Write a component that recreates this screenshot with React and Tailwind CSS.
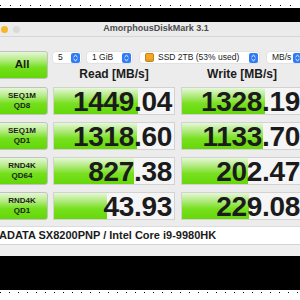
import React from "react";

const rows = [
  { a: "SEQ1M", b: "QD8", read: "1449.04", rw: 84, write: "1328.19", ww: 83 },
  { a: "SEQ1M", b: "QD1", read: "1318.60", rw: 83, write: "1133.70", ww: 81 },
  { a: "RND4K", b: "QD64", read: "827.38", rw: 80, write: "202.47", ww: 66 },
  { a: "RND4K", b: "QD1", read: "43.93", rw: 53, write: "229.08", ww: 67 },
];

const font = { fontFamily: '"Liberation Sans", Arial, sans-serif' };

function Stepper() {
  return (
    <svg width="9" height="10" viewBox="0 0 9 10" className="shrink-0">
      <rect x="0" y="0" width="9" height="10" rx="2" fill="#2f7cf6" />
      <path d="M2.6 4 L4.5 2.2 L6.4 4" stroke="#fff" strokeWidth="1" fill="none" />
      <path d="M2.6 6 L4.5 7.8 L6.4 6" stroke="#fff" strokeWidth="1" fill="none" />
    </svg>
  );
}

function DiskIcon() {
  return (
    <svg width="9" height="9" viewBox="0 0 9 9" className="shrink-0">
      <rect x="0.5" y="0.5" width="8" height="8" rx="1.2" fill="#f3a81f" stroke="#a8700e" strokeWidth="0.8" />
      <line x1="1" y1="7" x2="8" y2="7" stroke="#c98812" strokeWidth="0.6" />
    </svg>
  );
}

function Select({ w, children }) {
  return (
    <div className={`${w} h-[11px] bg-white rounded-[3px] flex items-center justify-between pl-[5px] pr-[1px] shadow-[0_0_0_0.5px_#d8d8d8]`}>
      <div className="flex items-center gap-[4px] text-[8.5px] leading-none text-[#222] whitespace-nowrap">{children}</div>
      <Stepper />
    </div>
  );
}

function GreenButton({ children }) {
  return (
    <div className="w-[52px] h-[28px] shrink-0 rounded-[3px] border border-[#c2c2c2] bg-[linear-gradient(180deg,#e4f7d6_0%,#b6ec86_30%,#74df1c_60%,#62d806_100%)] flex flex-col items-center justify-center text-[#1c1c1c]">
      {children}
    </div>
  );
}

function Cell({ value, width }) {
  return (
    <div className="relative w-[122px] h-[28px] shrink-0 border border-[#d2d2d2] bg-[#f5f5f5]">
      <div
        className="absolute left-0 top-0 bottom-0 bg-[linear-gradient(180deg,#e6f8d8_0%,#b2ea80_30%,#78e020_60%,#66d80a_100%)]"
        style={{ width }}
      />
      <div className="relative h-full pr-[2px] pt-[2px] text-right text-[28px] font-bold leading-[24px] text-[#1b1b1b] tracking-[-0.3px] whitespace-nowrap">
        {value}
      </div>
    </div>
  );
}

export default function App() {
  return (
    <div className="w-[300px] h-[300px] bg-white overflow-hidden flex flex-col" style={font}>
      <div className="h-[8px] shrink-0 flex flex-col">
        <div className="mt-[5px] h-px w-full bg-[repeating-linear-gradient(90deg,#000_0_1px,transparent_1px_10px)]" />
      </div>
      <div className="h-[14px] shrink-0 bg-black" />

      <div className="w-[312px] ml-[-4px] shrink-0 bg-[#ececec] flex flex-col">
        <div className="h-[15px] relative border-b border-[#d6d6d6] bg-[#ebebeb] flex items-center">
          <div className="flex items-center gap-[5px] pl-[5px]">
            <div className="w-[7px] h-[7px] rounded-full bg-[#f7b52c]" />
            <div className="w-[7px] h-[7px] rounded-full bg-[#d9d9d9]" />
          </div>
          <div className="absolute left-0 right-0 top-0 bottom-0 flex items-center justify-center pl-[8px] text-[9px] text-[#4a4a4a] font-semibold">
            AmorphousDiskMark 3.1
          </div>
        </div>

        <div className="flex flex-col pt-[14px]">
          <div className="h-[28px] flex gap-[5px]">
            <GreenButton>
              <span className="text-[11.5px] font-bold leading-none">All</span>
            </GreenButton>
            <div className="flex flex-col pt-[1px]">
              <div className="flex items-center">
                <Select w="w-[28px]">5</Select>
                <div className="w-[6px]" />
                <Select w="w-[45px]">1 GiB</Select>
                <div className="w-[8px]" />
                <div className="w-[119px] h-[11px] bg-white rounded-[3px] flex items-center justify-between pl-[5px] pr-[1px] shadow-[0_0_0_0.5px_#d8d8d8]">
                  <div className="flex items-center gap-[4px] text-[8.5px] leading-none text-[#222] whitespace-nowrap">
                    <DiskIcon />
                    SSD 2TB (53% used)
                  </div>
                  <Stepper />
                </div>
                <div className="w-[8px]" />
                <Select w="w-[36px]">MB/s</Select>
              </div>
              <div className="flex gap-[6px] mt-[5px]">
                <div className="w-[122px] text-center text-[12px] font-bold leading-none text-[#1b1b1b]">Read [MB/s]</div>
                <div className="w-[122px] text-center text-[12px] font-bold leading-none text-[#1b1b1b]">Write [MB/s]</div>
              </div>
            </div>
          </div>

          <div className="flex flex-col gap-[7px] mt-[8px]">
            {rows.map((r, i) => (
              <div key={i} className="flex">
                <GreenButton>
                  <span className="text-[8px] font-semibold leading-[10px]">{r.a}</span>
                  <span className="text-[8px] font-semibold leading-[10px]">{r.b}</span>
                </GreenButton>
                <div className="w-[5px]" />
                <Cell value={r.read} width={r.rw} />
                <div className="w-[6px]" />
                <Cell value={r.write} width={r.ww} />
              </div>
            ))}
          </div>

          <div className="mt-[6px] h-[18px] bg-white border-t border-[#dcdcdc] flex items-center pl-[3px] text-[11px] font-bold text-[#1b1b1b] whitespace-nowrap">
            ADATA SX8200PNP / Intel Core i9-9980HK
          </div>
          <div className="h-[12px] border-t border-[#d4d4d4] bg-[#efefef]" />
        </div>
      </div>

      <div className="h-[34px] shrink-0 bg-black" />
      <div className="h-[10px] shrink-0 flex flex-col">
        <div className="mt-[2px] h-px w-full bg-[repeating-linear-gradient(90deg,#000_0_1px,transparent_1px_9px)]" />
      </div>
    </div>
  );
}
